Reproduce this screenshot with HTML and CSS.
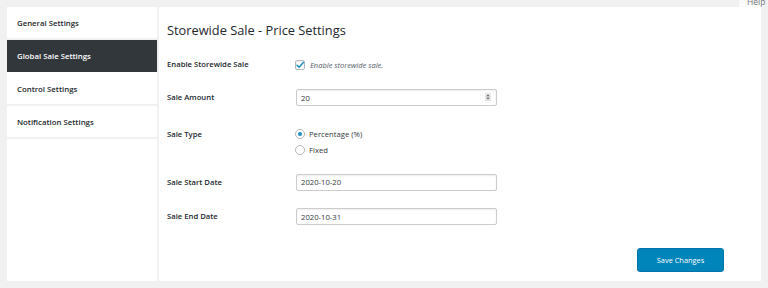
FILE: index.html
```html
<!DOCTYPE html>
<html lang="en">
<head>
<meta charset="utf-8">
<title>Storewide Sale - Price Settings</title>
<link rel="stylesheet" href="styles.css">
</head>
<body>
<div class="help-tab"><span class="help-text">Help ▾</span></div>
<div class="panel">
  <nav class="sidebar">
    <a class="nav-item">General Settings</a>
    <a class="nav-item active">Global Sale Settings</a>
    <a class="nav-item">Control Settings</a>
    <a class="nav-item">Notification Settings</a>
  </nav>
  <main class="main">
    <h2 class="title">Storewide Sale - Price Settings</h2>
    <div class="form">
      <div class="row">
        <div class="label">Enable Storewide Sale</div>
        <div class="field">
          <label class="check-line">
            <span class="checkbox"><svg viewBox="0 0 10 10" width="10" height="10"><path d="M2 5.2 L4.1 7.3 L8.3 2.4" fill="none" stroke="#1e8cbe" stroke-width="1.5" stroke-linecap="round" stroke-linejoin="round"/></svg></span>
            <span class="desc">Enable storewide sale.</span>
          </label>
        </div>
      </div>
      <div class="row">
        <div class="label">Sale Amount</div>
        <div class="field">
          <div class="input-wrap">
            <input class="input" type="text" value="20">
            <span class="spinner"><svg viewBox="0 0 6 8" width="6" height="8"><rect x="0" y="0" width="6" height="8" rx="1" fill="#e2e4e7"/><path d="M1.5 3.3 L3 1.6 L4.5 3.3 Z M1.5 4.7 L3 6.4 L4.5 4.7 Z" fill="#555"/></svg></span>
          </div>
        </div>
      </div>
      <div class="row row-type">
        <div class="label">Sale Type</div>
        <div class="field radios">
          <label class="radio-line"><span class="radio checked"></span><span class="opt">Percentage (%)</span></label>
          <label class="radio-line"><span class="radio"></span><span class="opt">Fixed</span></label>
        </div>
      </div>
      <div class="row">
        <div class="label">Sale Start Date</div>
        <div class="field"><input class="input" type="text" value="2020-10-20"></div>
      </div>
      <div class="row row-end">
        <div class="label">Sale End Date</div>
        <div class="field"><input class="input" type="text" value="2020-10-31"></div>
      </div>
    </div>
    <div class="footer">
      <button class="save" type="button">Save Changes</button>
    </div>
  </main>
</div>
</body>
</html>
```

FILE: styles.css
```css
html, body {
  margin: 0;
  padding: 0;
}
body {
  background: #f1f1f1;
  font-family: "Open Sans", "Noto Sans", sans-serif;
  color: #23282d;
  width: 768px;
  height: 288px;
  overflow: hidden;
  position: relative;
}
.help-tab {
  position: absolute;
  top: 0;
  right: 5px;
  width: 24px;
  height: 7px;
  background: #fbfbfb;
  overflow: visible;
}
.help-text {
  position: absolute;
  left: 8px;
  top: -4px;
  font-size: 8.5px;
  line-height: 11px;
  color: #72777c;
  white-space: nowrap;
}
.panel {
  margin: 7px 0 0 7px;
  width: 754px;
  height: 274px;
  display: flex;
  background: #fff;
}
.sidebar {
  width: 150px;
  border-right: 2px solid #f1f1f1;
  display: flex;
  flex-direction: column;
  background: #fff;
}
.nav-item {
  display: flex;
  align-items: center;
  height: 31px;
  padding-left: 10px;
  border-bottom: 2px solid #f1f1f1;
  font-size: 7.8px;
  font-weight: 600;
  color: #23282d;
}
.nav-item.active {
  background: #32373c;
  color: #fff;
  border-bottom-color: #fff;
  height: 32px;
  border-bottom-width: 1px;
}
.main {
  flex: 1;
  display: flex;
  flex-direction: column;
  padding: 14px 0 0 8px;
}
.title {
  margin: 0;
  font-size: 12.8px;
  line-height: 18px;
  font-weight: 400;
  color: #23282d;
}
.form {
  margin-top: 17px;
  display: flex;
  flex-direction: column;
  gap: 16px;
}
.row {
  display: flex;
  align-items: flex-start;
}
.row-type {
  margin-top: 3.5px;
}
.row-end {
  margin-top: 1.5px;
}
.label {
  width: 128px;
  flex: none;
  font-size: 7.7px;
  font-weight: 600;
  line-height: 17px;
  color: #23282d;
}
.field {
  display: flex;
  flex-direction: column;
}
.check-line {
  display: flex;
  align-items: center;
  height: 17px;
}
.checkbox {
  width: 8px;
  height: 8px;
  border: 1px solid #b4b9be;
  border-radius: 2px;
  background: #fff;
  display: flex;
  align-items: center;
  justify-content: center;
  box-shadow: inset 0 1px 2px rgba(0,0,0,0.08);
}
.checkbox svg {
  flex: none;
}
.desc {
  margin-left: 5px;
  font-size: 7.5px;
  font-style: italic;
  color: #555d66;
}
.input-wrap {
  position: relative;
  display: flex;
}
.input {
  box-sizing: border-box;
  width: 201px;
  height: 17px;
  margin: 0 0 0 1px;
  padding: 0 4px;
  border: 1px solid #ccc;
  border-radius: 2px;
  background: #fff;
  font-family: "Open Sans", "Noto Sans", sans-serif;
  font-size: 7.7px;
  color: #32373c;
  box-shadow: inset 0 1px 2px rgba(0,0,0,0.07);
  outline: none;
}
.spinner {
  position: absolute;
  right: 6px;
  top: 4px;
  display: flex;
}
.radio-line {
  display: flex;
  align-items: center;
  height: 16px;
}
.radio {
  box-sizing: border-box;
  width: 10px;
  height: 10px;
  border: 1px solid #b4b9be;
  border-radius: 50%;
  background: #fff;
  display: flex;
  align-items: center;
  justify-content: center;
}
.radio.checked::after {
  content: "";
  width: 4px;
  height: 4px;
  border-radius: 50%;
  background: #1e8cbe;
}
.opt {
  margin-left: 4px;
  font-size: 7.7px;
  color: #32373c;
}
.footer {
  margin-top: auto;
  display: flex;
  justify-content: flex-end;
  padding: 0 37px 9px 0;
}
.save {
  width: 87px;
  height: 24px;
  background: #0085ba;
  border: 1px solid #0073aa;
  border-radius: 3px;
  color: #fff;
  font-family: "Open Sans", "Noto Sans", sans-serif;
  font-size: 7.4px;
  padding: 0;
}
```
